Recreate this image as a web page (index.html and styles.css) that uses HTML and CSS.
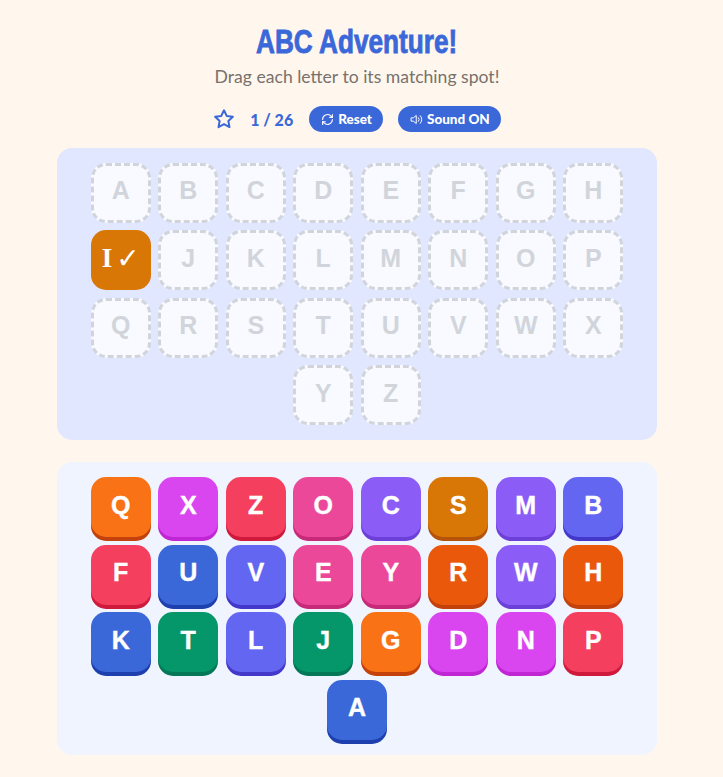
FILE: index.html
```html
<!DOCTYPE html>
<html lang="en">
<head>
<meta charset="utf-8">
<title>ABC Adventure!</title>
<link rel="stylesheet" href="styles.css">
</head>
<body>
<main class="game">
  <header class="head">
    <h1 class="title">ABC Adventure!</h1>
    <p class="sub">Drag each letter to its matching spot!</p>
    <div class="controls">
      <svg class="star" viewBox="0 0 24 24" fill="none" stroke="currentColor" stroke-width="2.2" stroke-linejoin="round" stroke-linecap="round"><path d="M12 2.5l2.95 6.1 6.7.92-4.88 4.66 1.2 6.64L12 17.6l-5.97 3.22 1.2-6.64L2.35 9.52l6.7-.92z"/></svg>
      <span class="score">1 / 26</span>
      <button class="btn"><svg class="ico" viewBox="0 0 24 24" fill="none" stroke="currentColor" stroke-width="2" stroke-linecap="round" stroke-linejoin="round"><path d="M3 12a9 9 0 0 1 15-6.7L21 8"/><path d="M21 3v5h-5"/><path d="M21 12a9 9 0 0 1-15 6.7L3 16"/><path d="M3 21v-5h5"/></svg>Reset</button>
      <button class="btn"><svg class="ico" viewBox="0 0 24 24" fill="none" stroke="currentColor" stroke-width="1.8" stroke-linecap="round" stroke-linejoin="round"><path d="M11 5L6 9H2v6h4l5 4z"/><path d="M15.5 8.5a5 5 0 0 1 0 7"/><path d="M19 5a10 10 0 0 1 0 14"/></svg>Sound ON</button>
    </div>
  </header>
  <section class="panel slots">
    <div class="slot">A</div><div class="slot">B</div><div class="slot">C</div><div class="slot">D</div><div class="slot">E</div><div class="slot">F</div><div class="slot">G</div><div class="slot">H</div>
    <div class="slot filled"><span class="serif">I</span><span class="check">✓</span></div><div class="slot">J</div><div class="slot">K</div><div class="slot">L</div><div class="slot">M</div><div class="slot">N</div><div class="slot">O</div><div class="slot">P</div>
    <div class="slot">Q</div><div class="slot">R</div><div class="slot">S</div><div class="slot">T</div><div class="slot">U</div><div class="slot">V</div><div class="slot">W</div><div class="slot">X</div>
    <div class="slot">Y</div><div class="slot">Z</div>
  </section>
  <section class="panel tiles">
    <div class="tile orange">Q</div><div class="tile fuchsia">X</div><div class="tile rose">Z</div><div class="tile pink">O</div><div class="tile violet">C</div><div class="tile amber">S</div><div class="tile violet">M</div><div class="tile indigo">B</div>
    <div class="tile rose">F</div><div class="tile blue">U</div><div class="tile indigo">V</div><div class="tile pink">E</div><div class="tile pink">Y</div><div class="tile burnt">R</div><div class="tile violet">W</div><div class="tile burnt">H</div>
    <div class="tile blue">K</div><div class="tile green">T</div><div class="tile indigo">L</div><div class="tile green">J</div><div class="tile orange">G</div><div class="tile fuchsia">D</div><div class="tile fuchsia">N</div><div class="tile rose">P</div>
    <div class="tile blue">A</div>
  </section>
</main>
</body>
</html>
```
FILE: styles.css
```css
* { box-sizing: border-box; }
html, body { margin: 0; }
body {
  background: #fff7ed;
  font-family: Lato, "Open Sans", sans-serif;
  min-height: 777px;
  padding-right: 9px;
}
.game { width: 600px; margin: 0 auto; padding-top: 20px; }
.head { display: flex; flex-direction: column; align-items: center; }
.title {
  margin: 0;
  font-family: "Liberation Sans", Arial, sans-serif;
  font-weight: 700;
  font-size: 34px;
  line-height: 42px;
  color: #3b68d9;
  -webkit-text-stroke: 0.9px #3b68d9;
  transform: scaleX(0.77);
}
.sub { margin: 3px 0 0; font-size: 17.6px; line-height: 24px; color: #78716c; }
.controls { display: flex; align-items: center; gap: 15px; margin-top: 17px; height: 26px; }
.star { width: 22px; height: 22px; color: #3b68d9; }
.score { font-weight: 900; font-size: 16px; width: 44px; white-space: nowrap; color: #3b68d9; }
.btn {
  display: flex; align-items: center; gap: 4px;
  height: 26px; padding: 0 11px 0 12px; border: 0; border-radius: 13px;
  background: #3b68d9; color: #fff;
  font: 900 13.5px Lato, sans-serif;
}
.ico { width: 13px; height: 13px; }
.panel {
  display: flex; flex-wrap: wrap; justify-content: center; gap: 7.5px;
  padding: 15px; border-radius: 15px;
}
.slots { margin-top: 15.75px; background: #e0e7ff; }
.tiles { margin-top: 22px; background: #eff4ff; }
.slot, .tile {
  width: 60px; height: 60px; border-radius: 15px;
  display: flex; align-items: center; justify-content: center;
  font-family: "Liberation Sans", Arial, sans-serif; font-weight: 700; font-size: 25px;
  padding-bottom: 4px;
}
.slot { background: #f8faff; border: 3px dashed #d1d5db; color: #d1d5db; }
.slot.filled { background: #d97706; border: 0; color: #fff; gap: 4px; }
.serif { font-family: "Liberation Serif", serif; font-size: 27px; }
.check { font-family: "DejaVu Sans", sans-serif; font-size: 28px; font-weight: 400; }
.tile { color: #fff; -webkit-text-stroke: 0.4px #fff; }
.orange { background: #f97316; box-shadow: 0 4px 0 #c2410c; }
.fuchsia { background: #d946ef; box-shadow: 0 4px 0 #c026d3; }
.rose { background: #f43f5e; box-shadow: 0 4px 0 #cf1a3c; }
.pink { background: #ec4899; box-shadow: 0 4px 0 #c72a78; }
.violet { background: #8b5cf6; box-shadow: 0 4px 0 #6d3fd9; }
.amber { background: #d97706; box-shadow: 0 4px 0 #b45309; }
.indigo { background: #6366f1; box-shadow: 0 4px 0 #4338ca; }
.blue { background: #3b68d9; box-shadow: 0 4px 0 #1e40af; }
.burnt { background: #ea580c; box-shadow: 0 4px 0 #c2410c; }
.green { background: #059669; box-shadow: 0 4px 0 #047857; }
```
